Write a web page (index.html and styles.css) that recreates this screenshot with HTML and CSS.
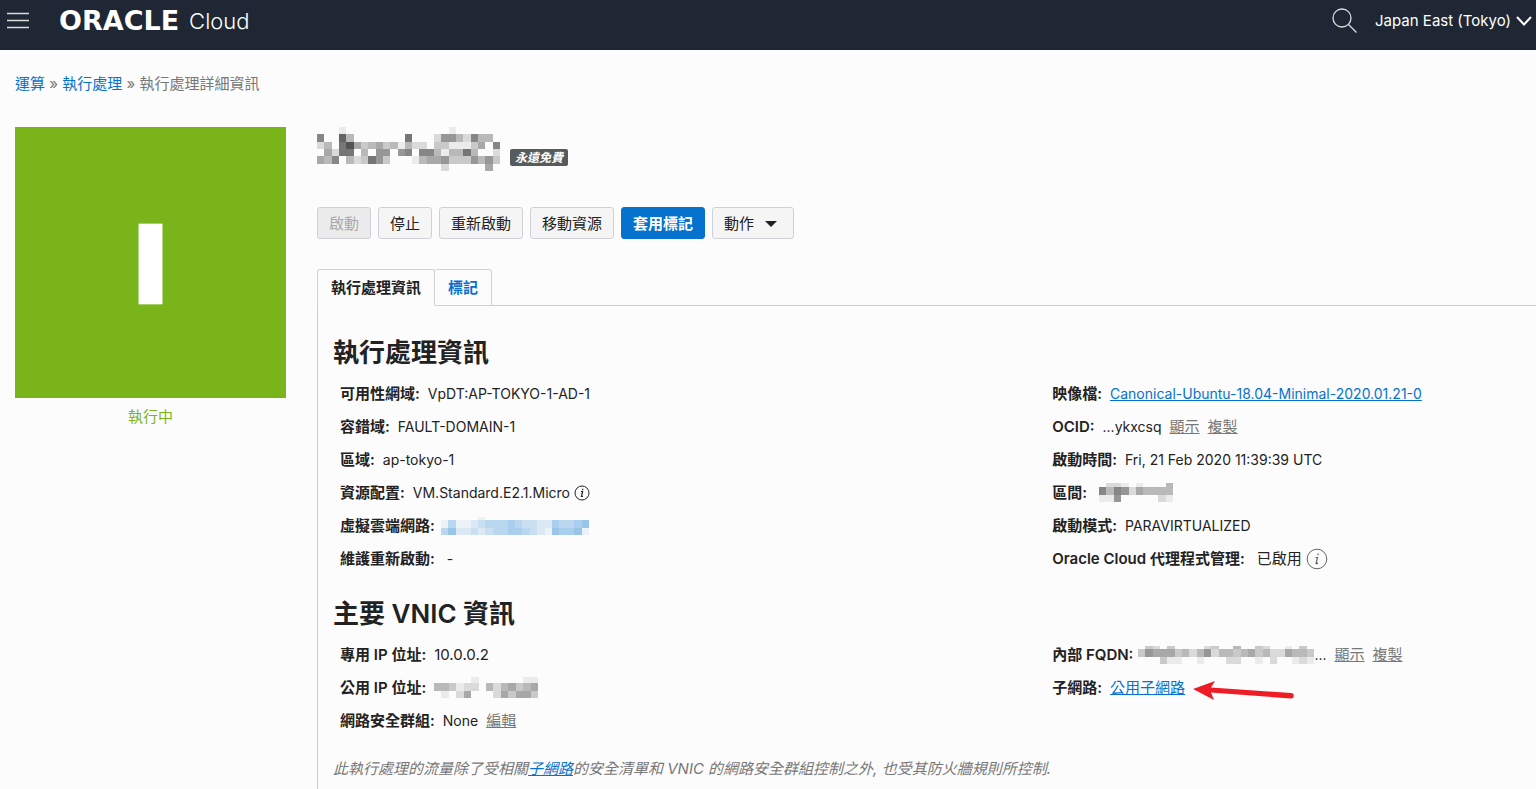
FILE: index.html
```html
<!DOCTYPE html>
<html lang="zh-Hant">
<head>
<meta charset="utf-8">
<title>Oracle Cloud</title>
<link rel="stylesheet" href="styles.css">
</head>
<body>
<header class="topbar">
  <button class="icon-button menu" type="button" aria-label="Menu">
    <svg width="22" height="17" viewBox="0 0 22 17" stroke="currentColor" stroke-width="1.3"><path d="M0 1.5h22M0 8.500h22M0 15.500h22"/></svg>
  </button>
  <a class="brand" href="#"><span class="brand-name">ORACLE</span><span class="brand-product">Cloud</span></a>
  <button class="icon-button search" type="button" aria-label="Search">
    <svg width="26" height="26" viewBox="0 0 26 26" fill="none" stroke="currentColor" stroke-width="1.3"><circle cx="10" cy="10" r="9"/><path d="M16.500 16.500l8 8"/></svg>
  </button>
  <button class="icon-button region" type="button">Japan East (Tokyo)
    <svg width="16" height="12" viewBox="0 0 16 12" fill="none" stroke="currentColor" stroke-width="2"><path d="M1 2l7 7.500L15 2"/></svg>
  </button>
</header>

<nav class="crumbs"><a href="#">運算</a> » <a href="#">執行處理</a> » <span>執行處理詳細資訊</span></nav>

<div class="page">
  <aside class="status">
    <div class="status-tile"><svg viewBox="0 0 272 272"><rect x="124" y="97" width="24" height="81" fill="#fff"/></svg></div>
    <p class="status-text">執行中</p>
  </aside>

  <main class="main">
    <div class="title-row">
      <svg class="mosaic title-mosaic" viewBox="0 0 25 6" data-rows="...e..............e......|8..6b.......7...d99bd8bb.|db.75acbacbebddfcceeecaf8|.ad77.b.99.98.88bebb7b..d|ab8fbdc79c.f.ebaa9ccc9b9c|.................d.....a."></svg>
      <span class="badge">永遠免費</span>
    </div>

    <div class="actions">
      <button type="button" class="btn" disabled>啟動</button>
      <button type="button" class="btn">停止</button>
      <button type="button" class="btn">重新啟動</button>
      <button type="button" class="btn">移動資源</button>
      <button type="button" class="btn btn-primary">套用標記</button>
      <button type="button" class="btn">動作<svg class="caret" width="12" height="6" viewBox="0 0 12 6"><path d="M0 0h12L6 6z" fill="currentColor"/></svg></button>
    </div>

    <div class="tabs" role="tablist">
      <button type="button" class="tab tab-active" role="tab" aria-selected="true">執行處理資訊</button>
      <button type="button" class="tab" role="tab" aria-selected="false">標記</button>
    </div>

    <div class="panel">
      <section>
        <h2>執行處理資訊</h2>
        <div class="columns">
          <dl>
            <div class="row"><dt>可用性網域:</dt><dd>VpDT:AP-TOKYO-1-AD-1</dd></div>
            <div class="row"><dt>容錯域:</dt><dd>FAULT-DOMAIN-1</dd></div>
            <div class="row"><dt>區域:</dt><dd>ap-tokyo-1</dd></div>
            <div class="row"><dt>資源配置:</dt><dd class="with-info">VM.Standard.E2.1.Micro
              <svg width="16" height="16" viewBox="0 0 16 16" fill="none" stroke="currentColor"><circle cx="8" cy="8" r="7"/><path d="M7 6.500h1.600L7.500 11.500h1.500M8.700 3.800v1.400" stroke-width="1.200"/></svg></dd></div>
            <div class="row row-tight"><dt>虛擬雲端網路:</dt><dd><svg class="mosaic mosaic-blue vcn-mosaic" viewBox="0 0 20 2.400" data-rows=".....e..............|ebeedcbbbabccddabba9|b9ddcdcbbaabcde9aa9e"></svg></dd></div>
            <div class="row row-wide"><dt>維護重新啟動:</dt><dd>-</dd></div>
          </dl>
          <dl>
            <div class="row"><dt>映像檔:</dt><dd><a class="link" href="#">Canonical-Ubuntu-18.04-Minimal-2020.01.21-0</a></dd></div>
            <div class="row"><dt>OCID:</dt><dd>...ykxcsq</dd><dd class="cjk"><a class="link-muted" href="#">顯示</a></dd><dd class="cjk"><a class="link-muted" href="#">複製</a></dd></div>
            <div class="row"><dt>啟動時間:</dt><dd>Fri, 21 Feb 2020 11:39:39 UTC</dd></div>
            <div class="row row-wide"><dt>區間:</dt><dd><svg class="mosaic compartment-mosaic" viewBox="0 0 10 2.600" data-rows=".dde.e...b|8b89dabbbb|ee9.....de"></svg></dd></div>
            <div class="row"><dt>啟動模式:</dt><dd>PARAVIRTUALIZED</dd></div>
            <div class="row row-wide"><dt>Oracle Cloud 代理程式管理:</dt><dd class="cjk with-info">已啟用
              <svg width="22" height="22" viewBox="0 0 22 22" fill="none" stroke="#666"><circle cx="11" cy="11" r="9.800"/><path d="M9.500 9.500h2L10 15.500q0 .6 2-.4M12 5.500v1.700" stroke-width="1.200"/></svg></dd></div>
          </dl>
        </div>
      </section>

      <section>
        <h2>主要 VNIC 資訊</h2>
        <div class="columns">
          <dl>
            <div class="row"><dt>專用 IP 位址:</dt><dd class="cjk">10.0.0.2</dd></div>
            <div class="row"><dt>公用 IP 位址:</dt><dd><svg class="mosaic ip-mosaic" viewBox="0 0 14 2.800" data-rows=".....e......ee|bbcedd.bdbacba|.e.da.f.dacaac"></svg></dd></div>
            <div class="row"><dt>網路安全群組:</dt><dd>None</dd><dd class="cjk"><a class="link-muted" href="#">編輯</a></dd></div>
          </dl>
          <dl>
            <div class="row"><dt>內部 FQDN:</dt><dd class="fqdn"><svg class="mosaic fqdn-mosaic" viewBox="0 0 24 2.400" data-rows=".cd.c....dc..b..cd..e.c.|c9aaacbdb9dbbcbacbddabbc|...cee..e...dd..e.d..ede"></svg>...</dd><dd class="cjk"><a class="link-muted" href="#">顯示</a></dd><dd class="cjk"><a class="link-muted" href="#">複製</a></dd></div>
            <div class="row"><dt>子網路:</dt><dd class="cjk marked"><a class="link" href="#">公用子網路</a>
              <svg class="arrow" width="102" height="22" viewBox="0 0 102 22"><path d="M0 9L22 1l-4 6.500 80 5.500a2.600 2.600 0 0 1 0 5.500L18 12.500l3 7.500z" fill="#ee1c25"/></svg></dd></div>
          </dl>
        </div>
      </section>
      <p class="note">此執行處理的流量除了受相關<a class="link" href="#">子網路</a>的安全清單和 VNIC 的網路安全群組控制之外, 也受其防火牆規則所控制.</p>
    </div>
  </main>
</div>
<script src="mosaic.js"></script>
</body>
</html>
```

FILE: styles.css
```css
* { box-sizing: border-box; }
body {
  margin: 0;
  min-height: 100vh;
  display: flex;
  flex-direction: column;
  background: #fcfcfc;
  color: #222;
  font: 15px/33px Inter, "Noto Sans CJK TC", sans-serif;
}
button { font: inherit; cursor: pointer; }
a { color: #0572ce; text-decoration: none; }
p, h2, dl, dd { margin: 0; }
svg { display: block; flex: none; }

.topbar {
  display: flex;
  align-items: center;
  height: 50px;
  padding: 0 4px 9px 7px;
  background: #1e2733;
  color: #fff;
}
.icon-button {
  display: flex;
  align-items: center;
  gap: 5px;
  padding: 0;
  border: 0;
  background: none;
  color: inherit;
  line-height: 24px;
}
.menu, .search { color: #ddd; }
.search { margin-left: auto; margin-right: 17px; }
.brand {
  display: flex;
  align-items: center;
  gap: 10px;
  margin-left: 30px;
  color: #fff;
  line-height: 30px;
}
.brand-name { font-family: "DejaVu Sans", sans-serif; font-size: 27px; font-weight: 700; }
.brand-product { font-size: 22px; font-weight: 300; }

.crumbs { padding: 17px 15px 0; color: #777; }

.page { flex: 1; display: flex; gap: 31px; padding-left: 15px; margin-top: 27px; }
.status { flex: 0 0 271px; }
.status-tile { background: #79b51a; }
.status-text { padding-top: 2px; color: #79b51a; text-align: center; }

.main { flex: 1; min-width: 0; display: flex; flex-direction: column; }
.title-row { display: flex; align-items: flex-start; gap: 10px; height: 80px; }
.mosaic { shape-rendering: crispEdges; color: #000; }
.mosaic-blue { color: #0572ce; }
.title-mosaic { width: 183px; height: 44px; }
.vcn-mosaic { width: 148px; height: 18px; }
.compartment-mosaic { width: 74px; height: 19px; }
.ip-mosaic { width: 104px; height: 21px; }
.fqdn-mosaic { width: 176px; height: 18px; }
.badge {
  margin-top: 22px;
  padding: 0 5px;
  border-radius: 2px;
  background: #565b5d;
  color: #fff;
  font-size: 12px;
  line-height: 17px;
  font-weight: 700;
  font-style: italic;
}

.actions { display: flex; gap: 7px; }
.btn {
  display: flex;
  align-items: center;
  height: 32px;
  padding: 0 11px;
  border: 1px solid #d0d1d6;
  border-radius: 3px;
  background: #f5f5f5;
  color: #222;
}
.btn:disabled { background: #ececec; color: #aaa; cursor: default; }
.btn-primary { border-color: #0572ce; background: #0572ce; color: #fff; font-weight: 600; }
.caret { margin: 2px 5px 0 11px; }

.tabs { display: flex; margin-top: 30px; border-bottom: 1px solid #ccc; }
.tab {
  height: 37px;
  padding: 0 13px;
  margin-bottom: -1px;
  border: 1px solid #d0d1d6;
  border-left: 0;
  border-radius: 3px 3px 0 0;
  background: #fcfcfc;
  color: #0572ce;
  font-weight: 600;
}
.tab-active { border-left: 1px solid #d0d1d6; border-bottom-color: #fcfcfc; color: #222; }

.panel { flex: 1; padding: 26px 9px 0 15px; border-left: 1px solid #ccc; }
h2 { font-size: 26px; line-height: 41px; font-weight: 600; }
section { margin-bottom: 18px; }
.columns { display: grid; grid-template-columns: 3fr 2fr; padding: 4px 0 0 7px; }
.row { display: flex; align-items: center; gap: 8px; height: 33px; white-space: nowrap; }
.row-tight { gap: 6px; }
.row-wide { gap: 12px; }
dt { font-weight: 600; }
dd { font-size: 14px; }
.cjk { font-size: 15px; }
.with-info { display: flex; align-items: center; gap: 4px; }
.fqdn { display: flex; align-items: center; margin-left: -3px; }
.marked { position: relative; }
.arrow { position: absolute; left: 100%; top: 9px; margin-left: 8px; }
.link, .link-muted { text-decoration: underline; }
.link-muted { color: #777; }
.note { color: #777; font-style: italic; line-height: 27px; }
```

FILE: mosaic.js
```js
// Each hex digit is the lightness of one cell; a dot leaves the cell empty.
document.querySelectorAll("svg[data-rows]").forEach(function (svg) {
  svg.setAttribute("preserveAspectRatio", "none");
  svg.dataset.rows.split("|").forEach(function (row, y) {
    Array.from(row).forEach(function (digit, x) {
      if (digit === ".") return;
      var cell = document.createElementNS("http://www.w3.org/2000/svg", "rect");
      cell.setAttribute("x", x);
      // Short grids show only the lower part of their first row.
      var lift = 3 - svg.viewBox.baseVal.height;
      var top = lift > 0 && lift < 1 ? y - lift : y;
      cell.setAttribute("y", top);
      cell.setAttribute("width", 1);
      cell.setAttribute("height", 1);
      cell.setAttribute("fill", "currentColor");
      cell.setAttribute("fill-opacity", (15 - parseInt(digit, 16)) / 15);
      svg.appendChild(cell);
    });
  });
});
```
